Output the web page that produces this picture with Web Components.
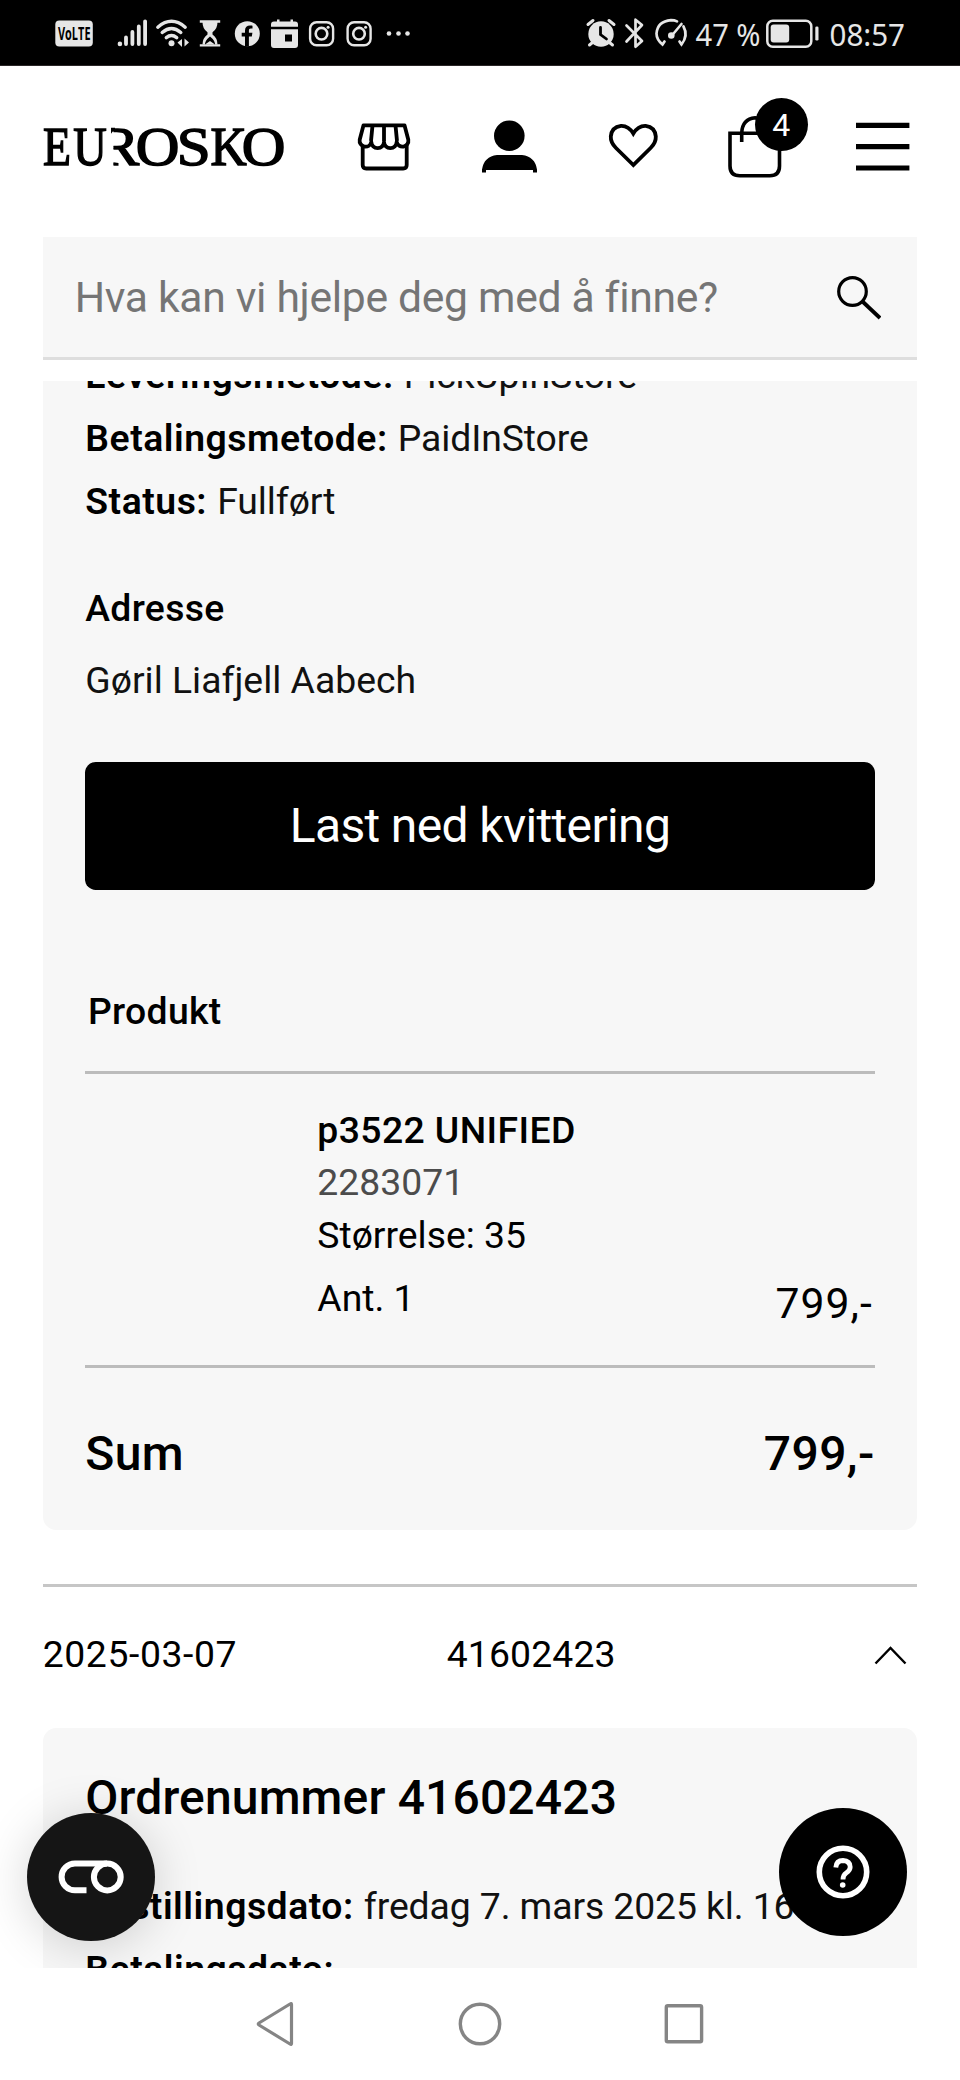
<!DOCTYPE html>
<html lang="no">
<head>
<meta charset="utf-8">
<title>Eurosko</title>
<style>
html,body{margin:0;padding:0;background:#fff}
body{font-family:Roboto,"Liberation Sans",sans-serif;color:#000;width:960px;height:2080px;overflow:hidden}
</style>
</head>
<body>
<phone-screen></phone-screen>
<script>
const define=(name,html)=>customElements.define(name,class extends HTMLElement{
  constructor(){super();const t=document.createElement('template');
    t.innerHTML=typeof html==='function'?html(this):html;
    this.attachShadow({mode:'open'}).appendChild(t.content.cloneNode(true));}
});
const svg=(x,y,w,h,body,style='')=>`<svg width="${w}" height="${h}" viewBox="${x} ${y} ${w} ${h}" style="${style}" aria-hidden="true">${body}</svg>`;
const insta=c=>`<g fill="none" stroke="#e6e6e6" stroke-width="2.4"><rect x="${c-11.4}" y="22.2" width="23" height="23" rx="6.5"/><circle cx="${c}" cy="33.7" r="5.8" stroke-width="2.6"/></g><circle cx="${c+6.6}" cy="27.3" r="1.5" fill="#e6e6e6"/>`;

define('status-bar',()=>`<style>
:host{display:flex;height:66px;background:#000;color:#e6e6e6;box-sizing:border-box;border-bottom:1px solid #2a2627;flex:none}
svg{display:block;flex:none}text{font-family:"Noto Sans",Roboto,sans-serif}
.l{display:flex;padding-left:50px;width:530px}.r{display:flex}
</style>
<div class="l">${
svg(50,0,60,66,`<rect x="55.3" y="20.5" width="37.5" height="26" rx="4" fill="#e6e6e6"/><text x="58" y="40" font-size="17" font-weight="700" fill="#000" textLength="32.5" lengthAdjust="spacingAndGlyphs" style="font-family:'Open Sans'">VoLTE</text>`)}${
svg(110,0,43,66,`<g stroke="#e6e6e6" stroke-width="3.8" stroke-linecap="round"><path d="M126 44V37.5M132.4 44V32M138.8 44V26.5M145.1 44V21.3"/></g><circle cx="119.9" cy="43.9" r="2.3" fill="#e6e6e6"/>`)}${
svg(153,0,42,66,`<g fill="none" stroke="#e6e6e6" stroke-width="3.4" stroke-linecap="round"><path d="M157.8 27.2Q171.5 15.5 185.2 27.2"/><path d="M162.2 32.5Q171.5 24.5 180.8 32.5"/><path d="M166.3 37.6Q171.5 33.5 176.7 37.6"/></g><circle cx="171.5" cy="43.2" r="3" fill="#e6e6e6"/><path d="M182 39v8l-4.5-4.5zM184.5 38.500v8l4.500-4z" fill="#e6e6e6"/>`)}${
svg(195,0,32,66,`<path d="M199.800 20.300h20.400v2.400h-20.400zM199.800 44.200h20.400v2.400h-20.400z" fill="#e6e6e6"/><path d="M202.500 22h15q0 7-5 10.200v2.300q5 3.500 5 10h-15q0-6.500 5-10v-2.300q-5-3.200-5-10.200z" fill="#e6e6e6"/><path d="M205 44.500q0-4 5-8 5 4 5 8l-5-3.500z" fill="#000"/>`)}${
svg(227,0,40,66,`<circle cx="247.300" cy="33.700" r="12.500" fill="#e6e6e6"/><path d="M245 46.500V36.500h-3.300v-3.700h3.300v-2.300c0-3.300 2-5 5-5 1.400 0 2.500.2 2.500.2v2.900h-1.600c-1.500 0-2 1-2 1.900v2.300h3.500l-.6 3.700h-2.900v10z" fill="#000"/>`)}${
svg(267,0,37,66,`<path d="M271 24.500q0-3 3-3h3v-2h2.500v2h11v-2h2.500v2h2q3 0 3 3v2.200H271zM271 29.200h27V45q0 3-3 3h-21q-3 0-3-3z" fill="#e6e6e6"/><rect x="285" y="34.500" width="7" height="7" fill="#000"/>`)}${
svg(304,0,36,66,insta(321.5))}${svg(340,0,38,66,insta(359))}${
svg(378,0,40,66,`<g fill="#e6e6e6"><circle cx="389" cy="33.500" r="2.300"/><circle cx="398.500" cy="33.500" r="2.300"/><circle cx="407.500" cy="33.500" r="2.300"/></g>`)}
</div><div class="r">${
svg(580,0,40,66,`<circle cx="601" cy="34" r="12.700" fill="#e6e6e6"/><path d="M588 24.500l5-4M614 24.500l-5-4M592.500 42.500l-3 2.500M609.500 42.500l3 2.500" stroke="#e6e6e6" stroke-width="3" stroke-linecap="round"/><path d="M600.500 27.500v7l6 4.500" fill="none" stroke="#000" stroke-width="2.800" stroke-linecap="round"/>`)}${
svg(620,0,30,66,`<path d="M626.500 25.500l15.500 15.500-6.500 5.700V19.700l6.500 5.300-15.500 16.500" fill="none" stroke="#e6e6e6" stroke-width="2.700" stroke-linejoin="round" stroke-linecap="round"/>`)}${
svg(650,0,42,66,`<g fill="none" stroke="#e6e6e6" stroke-linecap="round"><path d="M664.500 41.500l-2 3q-6-5-6-11 1-12 14.500-13.300 3.500 0 6 1.200M683.500 26.500q5 9-2 18l-2-3" stroke-width="2.700"/><path d="M671.500 36l10-12" stroke-width="2.600"/></g><circle cx="671.300" cy="35.500" r="3.300" fill="#e6e6e6"/>`)}${
svg(692,0,70,66,`<text x="695.500" y="45.500" font-size="31" fill="#e6e6e6" textLength="65" lengthAdjust="spacingAndGlyphs">47 %</text>`)}${
svg(762,0,62,66,`<rect x="767.300" y="20.700" width="44" height="26" rx="5.500" fill="none" stroke="#e6e6e6" stroke-width="2.500"/><rect x="770.700" y="24.500" width="18.500" height="18" rx="3" fill="#e6e6e6"/><rect x="815.300" y="26.500" width="3.200" height="14" rx="1.300" fill="#e6e6e6"/>`)}${
svg(824,0,90,66,`<text x="829.500" y="45.500" font-size="31" fill="#e6e6e6" textLength="75.500" lengthAdjust="spacingAndGlyphs">08:57</text>`)}
</div>`);

define('shop-header',()=>`<style>
:host{display:flex;flex:none;height:171px;align-items:flex-start;padding:0 43px;box-sizing:border-box}
svg{display:block;flex:none;overflow:visible}
.bag{position:relative;display:block;width:53px;margin-left:70px}
.badge{position:absolute;left:26.500px;top:32px;width:53.400px;height:53.400px;border-radius:50%;background:#000;color:#fff;font-size:32px;line-height:54px;text-align:center}
</style>${
svg(43,66,240,120,`<defs><clipPath id="r"><path d="M113.500 120h40v60h-40z"/></clipPath></defs>
<g font-family="Liberation Serif" font-size="54.500" fill="#000" stroke="#000" stroke-width="1.500">
<text transform="translate(43 164.500) scale(.84 1)">E</text>
<text transform="translate(73.300 164.500) scale(.85 1)">U</text>
<g clip-path="url(#r)"><text transform="translate(99.500 164.500) scale(1.090 1)">R</text></g>
<text transform="translate(135.700 164.500) scale(1.110 1)">O</text>
<text transform="translate(176.800 164.500) scale(1.120 1)">S</text>
<text transform="translate(210.500 164.500) scale(.92 1)">K</text>
<text transform="translate(241.700 164.500) scale(1.110 1)">O</text>
</g><path d="M111 127.800h4v3q-2.500 0-4 3z"/>`)}${
svg(358,66,52,120,`<g fill="none" stroke="#000" stroke-width="3.800" stroke-linejoin="round"><path d="M363.500 125.300h41l3.800 14.500a5.800 5.800 0 0 1-11.600 2 6.300 6.300 0 0 1-12.700 0 6.300 6.300 0 0 1-12.700 0 5.800 5.800 0 0 1-11.600-2z"/><path d="M372.500 125.500l-1.500 15.500M384 125.500v15.500M395.500 125.500l1.500 15.500M362.700 145v20q0 3.500 3.500 3.500h37q3.500 0 3.500-3.500V145"/></g>`,'margin-left:75px')}${
svg(482,66,55,120,`<circle cx="509.300" cy="135.700" r="15.300"/><path d="M482 172.500v-3q2-13 15-14.500h25q13 1.500 15 14.500v3h-4v-2.500h-47v2.500z"/>`,'margin-left:72px')}${
svg(609,66,49,120,`<path d="M633.300 165l-17.300-17q-5.500-5.500-5.200-11.500.7-9.500 10.200-10.700 7.500-.3 12.300 7.700 4.800-8 12.300-7.700 9.500 1.200 10.200 10.700.3 6-5.200 11.500z" fill="none" stroke="#000" stroke-width="3.800"/>`,'margin-left:72px')}
<div class="bag">${
svg(728,66,53,120,`<path d="M730 133.300h49.500v32.700q0 9.700-9.700 9.700h-30q-9.800 0-9.800-9.700zM741.700 142v-9q.5-14 13.500-15.300 11.500 0 13.500 15.300" fill="none" stroke="#000" stroke-width="3.600"/>`)}<span class="badge">4</span></div>${
svg(856,66,53.5,120,`<path d="M856 125.300h53.400M856 146.700h53.400M856 168h53.400" stroke="#000" stroke-width="5.200"/>`,'margin-left:75px')}`);

define('search-field',()=>`<style>
:host{display:flex;flex:none;align-items:center;justify-content:space-between;margin:0 42.670px;height:122.500px;box-sizing:border-box;padding:0 36px 0 32px;background:#f7f7f7;border-bottom:3px solid #dedede;color:#757575;font-size:42.670px;letter-spacing:-.31px}
svg{display:block;margin-top:3px}
span{margin-top:1px}
</style><span><slot></slot></span>${
svg(837,277,44,44,`<circle cx="852.500" cy="292.500" r="13.800" fill="none" stroke="#000" stroke-width="3.200"/><path d="M862.500 302.500L880 319" stroke="#000" stroke-width="3.800"/>`)}`);

define('info-row',`<style>
:host{display:block;height:63px;line-height:63px;font-size:37.330px;white-space:nowrap;color:#111;letter-spacing:-.1px}
::slotted(b){font-weight:600;color:#000;letter-spacing:.52px;margin-right:1px}
</style><slot></slot>`);

define('block-title',`<style>
:host{display:block;height:64px;line-height:64px;font-size:37.330px;font-weight:500;white-space:nowrap;letter-spacing:.3px}
:host([large]){font-size:48px;letter-spacing:.15px}
</style><slot></slot>`);

define('order-card',`<style>
:host{display:block;background:#f7f7f7;border-radius:13.330px;padding:0 42.670px;margin:0 42.670px;box-sizing:border-box;flex:none}
</style><slot></slot>`);

define('black-button',`<style>
:host{display:flex;align-items:center;justify-content:center;height:128.500px;border-radius:10.670px;background:#000;color:#fff;font-size:48px;letter-spacing:-.65px}
</style><slot></slot>`);

define('product-line',`<style>
:host{display:flex;box-sizing:border-box;height:296.900px;border-top:3px solid #bcbcbc;border-bottom:3px solid #bcbcbc;padding:29.800px 3px 30.500px 232px;justify-content:space-between;align-items:stretch;font-size:37.330px;line-height:52.500px;white-space:nowrap}
.d{display:flex;flex-direction:column}
.n{font-weight:500;letter-spacing:.4px}.i{color:#4c4c4c}.q{margin-top:10.500px}
.p{align-self:flex-end;font-size:42.670px;line-height:60px;letter-spacing:1px;margin:0 -1px 1px 0}
</style><div class="d"><span class="n"><slot name="name"></slot></span><span class="i"><slot name="sku"></slot></span><span><slot name="size"></slot></span><span class="q"><slot name="qty"></slot></span></div><div class="p"><slot name="price"></slot></div>`);

define('sum-line',`<style>
:host{display:flex;justify-content:space-between;height:64px;line-height:64px;font-size:48px;font-weight:500;letter-spacing:.4px}
</style><span><slot name="label"></slot></span><span><slot name="total"></slot></span>`);

define('order-row',()=>`<style>
:host{display:grid;flex:none;grid-template-columns:404px 1fr auto;align-items:center;box-sizing:border-box;margin:0 42.670px;border-top:3px solid #c6c6c6;height:144px;padding:34.500px 10px 42px 0;font-size:37.330px;line-height:64px}
.date{letter-spacing:.6px}.num{letter-spacing:.15px}
svg{display:block}
</style><span class="date"><slot name="date"></slot></span><span class="num"><slot name="number"></slot></span>${
svg(873,1643,33,22,`<path d="M874.500 1663.500l15-15.500 15 15.500" fill="none" stroke="#000" stroke-width="2.400"/>`)}`);

define('round-fab',`<style>
:host{position:absolute;display:flex;align-items:center;justify-content:center;width:128px;height:128px;border-radius:50%}
:host([consent]){left:27px;top:1813px;background:#151515;box-shadow:0 5px 48px rgba(0,0,0,.17)}
:host([help]){left:779px;top:1808px;background:#000}
</style><slot></slot>`);

define('nav-bar',()=>`<style>
:host{display:flex;flex:none;position:relative;height:112px;background:#fff;justify-content:space-between;align-items:center;padding:0 255px 0 254px;box-sizing:border-box}
svg{display:block}
</style>${
svg(254,2002,42,44,`<path d="M291.500 2004.500v39q0 1.500-1.500.500l-31-19q-1.500-1 0-2l31-19q1.500-1 1.500.500z" fill="none" stroke="#858585" stroke-width="3.200"/>`)}${
svg(458,2002,44,44,`<circle cx="480" cy="2024" r="19.700" fill="none" stroke="#858585" stroke-width="3.400"/>`)}${
svg(663,2002,42,44,`<rect x="666.300" y="2005.700" width="35.300" height="36" rx="1.500" fill="none" stroke="#858585" stroke-width="3.400"/>`)}`);

define('phone-screen',()=>`<style>
:host{display:flex;flex-direction:column;position:relative;width:960px;height:2080px;overflow:hidden;background:#fff}
main{display:flex;flex-direction:column;flex:1;overflow:hidden;margin-top:21.500px;min-height:0}
.first{margin-top:-37px;padding-bottom:44.700px}
.second{margin-top:0;padding-top:38.600px;height:300px}
</style>
<status-bar></status-bar>
<shop-header></shop-header>
<search-field>Hva kan vi hjelpe deg med å finne?</search-field>
<main>
<order-card class="first">
<info-row><b>Leveringsmetode:</b> PickUpInStore</info-row>
<info-row><b>Betalingsmetode:</b> PaidInStore</info-row>
<info-row><b>Status:</b> Fullført</info-row>
<block-title style="margin-top:43px">Adresse</block-title>
<info-row style="margin-top:9px;letter-spacing:0">Gøril Liafjell Aabech</info-row>
<black-button style="margin-top:49.700px">Last ned kvittering</black-button>
<block-title style="margin:88.700px 0 28px 2.670px">Produkt</block-title>
<product-line><span slot="name">p3522 UNIFIED</span><span slot="sku">2283071</span><span slot="size">Størrelse: 35</span><span slot="qty">Ant. 1</span><span slot="price">799,-</span></product-line>
<sum-line style="margin-top:54px"><span slot="label">Sum</span><span slot="total">799,-</span></sum-line>
</order-card>
<order-row style="margin-top:53.300px"><span slot="date">2025-03-07</span><span slot="number">41602423</span></order-row>
<order-card class="second">
<block-title large>Ordrenummer 41602423</block-title>
<info-row style="margin-top:44.500px"><b>Bestillingsdato:</b> fredag 7. mars 2025 kl. 16</info-row>
<info-row><b>Betalingsdato:</b></info-row>
</order-card>
</main>
<round-fab consent>${svg(58,1860,66,34,`<g fill="none" stroke="#fff" stroke-width="6"><path d="M86.500 1890.300H75a13.300 13.300 0 0 1 0-26.800H107"/><circle cx="107.300" cy="1877" r="13.400"/></g>`)}</round-fab>
<round-fab help>${svg(815,1844,56,56,`<circle cx="843" cy="1872" r="23.700" fill="none" stroke="#fff" stroke-width="5.600"/><path d="M835.800 1867.500q.5-7 7.200-7 7 .3 7.200 6.500 0 3.500-4 6-3.200 2-3.200 6.500" fill="none" stroke="#fff" stroke-width="4.800"/><circle cx="842.700" cy="1885" r="2.800" fill="#fff"/>`)}</round-fab>
<nav-bar></nav-bar>`);
</script>
</body>
</html>
